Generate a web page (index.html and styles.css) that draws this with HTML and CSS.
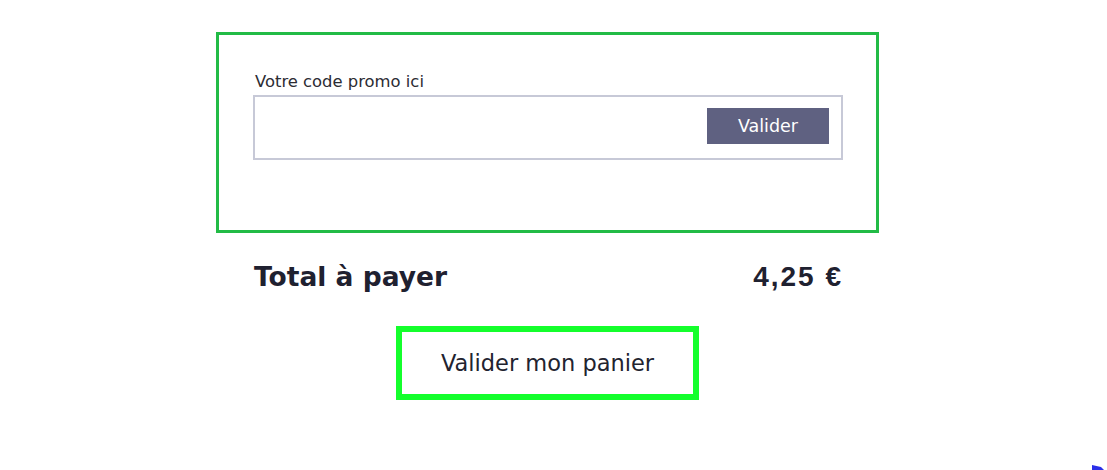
FILE: index.html
```html
<!DOCTYPE html>
<html lang="fr">
<head>
<meta charset="utf-8">
<title>Panier</title>
<link rel="stylesheet" href="styles.css">
</head>
<body>
<main class="cart">
  <section class="promo">
    <label class="promo-label" for="promo">Votre code promo ici</label>
    <div class="promo-field">
      <input id="promo" class="promo-input" type="text">
      <button class="promo-btn" type="button">Valider</button>
    </div>
  </section>
  <div class="total">
    <span class="total-label">Total à payer</span>
    <span class="total-value">4,25 €</span>
  </div>
  <div class="checkout">
    <button class="checkout-btn" type="button">Valider mon panier</button>
  </div>
</main>
<svg class="corner-mark" width="12" height="6" viewBox="0 0 12 6"><path d="M0 1 L9 3 L12 6 L0 6 Z" fill="#2b2fe8"/></svg>
</body>
</html>
```
FILE: styles.css
```css
html, body {
  margin: 0;
  padding: 0;
  background: #ffffff;
}
body {
  font-family: "DejaVu Sans", "Inter", sans-serif;
  color: #22232f;
  padding: 32px 12px 0 0;
  height: 438px;
  overflow: hidden;
}
.cart {
  width: 663px;
  margin: 0 auto;
}
.promo {
  box-sizing: border-box;
  width: 663px;
  height: 201px;
  border: 3px solid #22bb46;
  padding: 37px 33px 0 34px;
}
.promo-label {
  display: block;
  font-size: 16.4px;
  line-height: 20px;
  color: #2c2c33;
  margin-left: 2px;
  margin-bottom: 3px;
}
.promo-field {
  box-sizing: border-box;
  height: 65px;
  border: 2px solid #c7c9d7;
  display: flex;
  align-items: flex-start;
  padding: 11px 12px 0 0;
}
.promo-input {
  flex: 1;
  border: 0;
  outline: none;
  height: 36px;
  background: transparent;
}
.promo-btn {
  width: 122px;
  height: 36px;
  border: 0;
  background: #5f6181;
  color: #ffffff;
  font-family: "DejaVu Sans", "Inter", sans-serif;
  font-size: 17.5px;
  padding: 0;
}
.total {
  display: flex;
  justify-content: space-between;
  align-items: baseline;
  padding: 28px 38px 0 38px;
  line-height: 32px;
}
.total-label {
  font-size: 26.5px;
  font-weight: 700;
  color: #1f2130;
}
.total-value {
  font-family: "Liberation Sans", Arial, sans-serif;
  font-size: 28px;
  font-weight: 700;
  letter-spacing: 2px;
  margin-right: -2px;
  color: #1f2130;
}
.checkout {
  display: flex;
  justify-content: center;
  padding-top: 33px;
}
.checkout-btn {
  box-sizing: border-box;
  width: 303px;
  height: 74px;
  border: 6px solid #14ff2c;
  background: #ffffff;
  color: #22232f;
  font-family: "DejaVu Sans", "Inter", sans-serif;
  font-size: 22.5px;
  padding: 0;
}
.corner-mark {
  position: fixed;
  right: 3px;
  bottom: 0;
}
```
